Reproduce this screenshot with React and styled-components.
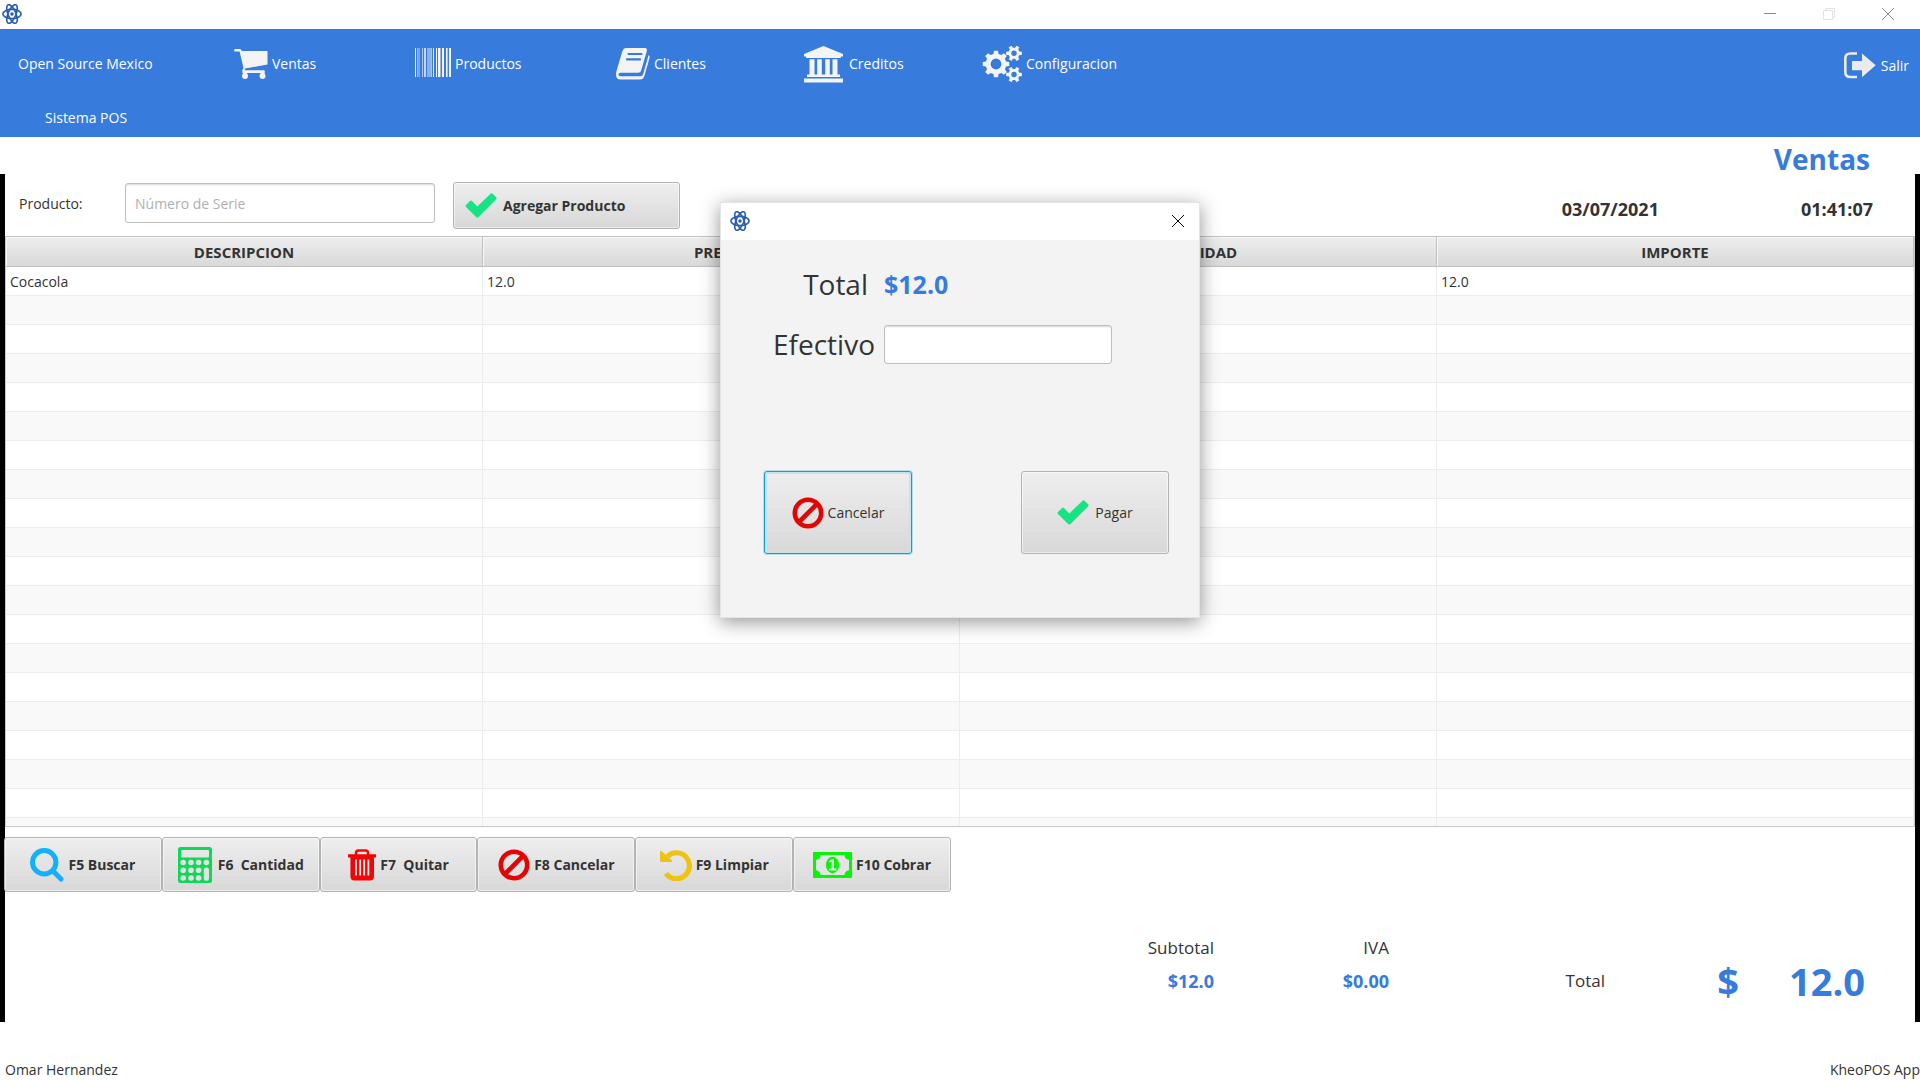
import React from "react";
import styled, { createGlobalStyle, css } from "styled-components";

const BLUE = "#377bdc";
const INK = "#333333";

const Global = createGlobalStyle`
  * { box-sizing: border-box; }
  html, body { margin: 0; background: #fff; }
  body, button, input { font-family: "Open Sans", "Noto Sans", sans-serif; font-size: 14px; line-height: 20px; color: ${INK}; }
  svg { display: block; flex: none; }
`;

/* ---------- drawings ---------- */
const Logo = () => (
  <svg width="20" height="20" viewBox="0 0 20 20" fill="none" stroke="#2a5fae" strokeWidth="1.7" aria-hidden="true">
    <ellipse cx="10" cy="10" rx="9.1" ry="4.6" />
    <ellipse cx="10" cy="10" rx="10" ry="3.9" transform="rotate(67 10 10)" />
    <ellipse cx="10" cy="10" rx="10" ry="3.9" transform="rotate(-67 10 10)" />
    <circle cx="10" cy="10" r="1.8" fill="#2a5fae" stroke="none" />
  </svg>
);

const Cart = () => (
  <svg width="34" height="30" viewBox="0 0 34 30" fill="#f4f4f4" aria-hidden="true">
    <path d="M1.2 0H6.4L8 2H33.5V15.5L11 19.5L10.7 21.3H30.5V24H8.5L8.2 21.5L9.5 19L5.6 2.6H1.2Q0 2.4 0 1.3Q0 .2 1.2 0Z" />
    <circle cx="11" cy="27" r="3" />
    <circle cx="28.5" cy="27" r="3" />
    <path d="M9 22h4v4H9zM26.5 22h4v4h-4z" />
  </svg>
);

const bars = [[0, 1], [2, 1, 0.5], [3, 2, 0.35], [7, 1, 0.6], [9, 2, 0.75], [12, 4, 0.45], [16, 1, 0.6], [18, 1], [21, 1], [23, 2], [25, 1, 0.5], [27, 2], [31, 1], [32, 1, 0.6], [34, 2]];
const Barcode = () => (
  <svg width="36" height="32" viewBox="0 0 36 32" fill="#f4f4f4" aria-hidden="true">
    {bars.map(([x, w, o]) => <rect key={x} x={x} y="0" width={w} height="29" opacity={o || 1} />)}
  </svg>
);

const Book = () => (
  <svg width="34" height="32" viewBox="0 0 34 32" aria-hidden="true">
    <path d="M10 0H29Q31.5.3 30.8 3L25.2 22.5Q24.5 24.8 22 24.8H4.5Q2 25 2.6 27.2Q3 28.2 5 28.2H24.5Q26.5 28.2 27.2 26L32.6 7Q34 8 33.5 10L28.4 28Q27.2 31.6 24 31.6H4.5Q0 31.4 0 26.5Q0 24.5 .8 22L6.4 3Q7.4.2 10 0Z" fill="#f4f4f4" />
    <path d="M12.5 6h13M11 11.4h13" stroke={BLUE} strokeWidth="2.2" strokeLinecap="round" />
  </svg>
);

const Bank = () => (
  <svg width="41" height="37" viewBox="0 0 41 37" fill="#f4f4f4" aria-hidden="true">
    <path d="M19.5 0L39 8V10.5H36.8V12H2.2V10.5H0V8ZM5.5 13.2H10.5V28.5H13.2V13.2H17.8V28.5H21.2V13.2H25.8V28.5H28.5V13.2H33.5V28.5H36V31H3V28.5H5.5ZM0 32.5H39V36.5H0Z" />
  </svg>
);

const gearPath = (cx, cy, r, inner, teeth) => {
  const step = (Math.PI * 2) / teeth;
  const pts = [];
  for (let i = 0; i < teeth; i += 1) {
    const a = i * step;
    [[-0.31, inner], [-0.2, r], [0.2, r], [0.31, inner]].forEach(([t, rad]) => {
      pts.push(`${(cx + Math.cos(a + t * step) * rad).toFixed(2)} ${(cy + Math.sin(a + t * step) * rad).toFixed(2)}`);
    });
  }
  return `M${pts.join("L")}Z`;
};
const hole = (cx, cy, r) => `M${cx - r} ${cy}a${r} ${r} 0 1 0 ${2 * r} 0a${r} ${r} 0 1 0 ${-2 * r} 0Z`;
const Gears = () => (
  <svg width="40" height="36" viewBox="0 0 40 36" fill="#f4f4f4" fillRule="evenodd" aria-hidden="true">
    <path d={gearPath(14, 18, 13.4, 10.4, 8) + hole(14, 18, 5.4)} />
    <path d={gearPath(32, 7.3, 8, 5.6, 6) + hole(32, 7.3, 2.7)} />
    <path d={gearPath(32, 28.5, 8, 5.6, 6) + hole(32, 28.5, 2.7)} />
  </svg>
);

const Exit = () => (
  <svg width="33" height="28" viewBox="0 0 33 28" aria-hidden="true">
    <path d="M13 1.5H6.5Q1.3 1.5 1.3 6.5V20Q1.3 25 6.5 25H13" fill="none" stroke="#ebebeb" strokeWidth="2.6" />
    <path d="M8 9H18V1.5L31.7 13.3L18 25.2V18.3H8Z" fill="#ebebeb" />
  </svg>
);

const Check = () => (
  <svg width="32" height="25" viewBox="0 0 32 25" aria-hidden="true">
    <path d="M1 12L5 8Q6 7.2 7 8L12.3 13.4L25.6 .7Q26.7 0 27.6 .8L31.2 4.3Q32 5.3 31.2 6.3L13.3 24.2Q12.3 25 11.3 24.2L1 14Q0 13 1 12Z" fill="#17e383" />
  </svg>
);

const Ban = () => (
  <svg width="32" height="32" viewBox="0 0 32 32" fill="none" stroke="#e30505" strokeWidth="4.6" aria-hidden="true">
    <circle cx="16" cy="16" r="13.2" />
    <path d="M6.5 25.5L25.5 6.5" />
  </svg>
);

const Search = () => (
  <svg width="34" height="34" viewBox="0 0 34 34" fill="none" stroke="#12b0ff" strokeWidth="5" strokeLinecap="round" aria-hidden="true">
    <circle cx="14.2" cy="14.2" r="11.7" />
    <path d="M23.5 23.5L31 31" />
  </svg>
);

const Calculator = () => (
  <svg width="36" height="36" viewBox="0 0 36 36" aria-hidden="true">
    <rect width="34" height="36" rx="2.5" fill="#0fd858" />
    <rect x="3" y="3" width="28" height="7.6" rx="1" fill="#e6e6e6" />
    <g fill="#e2e2e2">
      {[15.5, 23.3, 31].map((y) => [5.2, 13, 20.6].map((x) => <circle key={`${x}-${y}`} cx={x} cy={y} r="2.8" />))}
      <circle cx="28.4" cy="15.5" r="2.8" />
      <rect x="25.8" y="20.6" width="5.2" height="13.2" rx="2.2" />
    </g>
  </svg>
);

const Trash = () => (
  <svg width="28" height="32" viewBox="0 0 28 32" aria-hidden="true">
    <path d="M8 6V3.8Q8 1.5 10.3 1.5H17.7Q20 1.5 20 3.8V6" fill="none" stroke="#f20505" strokeWidth="2.4" />
    <path d="M0 5.2H28V8.6H26V27Q26 31.5 21.8 31.5H6.2Q2.4 31.5 2.4 27V8.6H0Z" fill="#f20505" />
    <path d="M8 10.5V26.5M12.2 10.5V26.5M16.2 10.5V26.5M20.4 10.5V26.5" stroke="#e6e6e6" strokeWidth="1.8" />
  </svg>
);

const Undo = () => (
  <svg width="32" height="32" viewBox="0 0 32 32" aria-hidden="true">
    <path d="M7.4 7.4A13 13 0 1 1 6 24.5" fill="none" stroke="#efc312" strokeWidth="5.2" />
    <path d="M0 2.4Q.4 1.4 1.6 2.2L12 11.6Q12.6 12.8 11.2 13H1.2Q0 12.8 0 11.6Z" fill="#efc312" />
  </svg>
);

const Money = () => (
  <svg width="39" height="26" viewBox="0 0 39 26" aria-hidden="true">
    <rect width="39" height="26" rx="1" fill="#05f505" />
    <path d="M7.5 3H31.5Q31.8 7.4 36 7.8V18.2Q31.8 18.6 31.5 23H7.5Q7.2 18.6 3 18.2V7.8Q7.2 7.4 7.5 3Z" fill="#e4e4e4" />
    <ellipse cx="19.5" cy="13" rx="6.6" ry="8.3" fill="#05f505" />
    <path d="M16.3 8.8L19.4 7H21V16.6H23.6V18.6H15.8V16.6H18.5V9.8L16.3 10.6Z" fill="#e4e4e4" />
  </svg>
);

/* ---------- shared parts ---------- */
const raised = css`
  border: 1px solid #b3b3b3;
  border-radius: 3px;
  background: linear-gradient(#eeeeee, #d8d8d8);
  box-shadow: inset 0 0 0 1px rgba(255, 255, 255, 0.55);
`;

const field = css`
  border: 1px solid #bdbdbd;
  border-radius: 3px;
  background: #fff;
  box-shadow: inset 0 2px 2px -1px #d8d8d8;
  outline: none;
  min-width: 0;
`;

/* ---------- window ---------- */
const Window = styled.div`
  min-height: 100vh;
  display: flex;
  flex-direction: column;
  overflow: hidden;
`;

const TitleBar = styled.header`
  height: 29px;
  padding: 4px 0 0 2px;
  display: flex;
  justify-content: space-between;
`;

const WindowButtons = styled.div`
  display: flex;
  gap: 35px;
  padding: 1px 20px 0 0;
`;

const GlyphButton = styled.button`
  border: 0;
  padding: 0 6px;
  height: 18px;
  background: none;
  color: ${(p) => p.$color};
`;

const Menu = styled.nav`
  height: 108px;
  padding: 15px 11px 0 18px;
  background: ${BLUE};
  color: #fff;
  display: grid;
  grid-template-columns: 210px 183px 199px 195px 177px auto 1fr;
  grid-template-rows: 40px 34px;
  row-gap: 17px;
  align-items: center;
`;

const Brand = styled.span`
  grid-row: ${(p) => p.$row};
  padding-left: ${(p) => (p.$row === 2 ? 27 : 0)}px;
`;

const MenuButton = styled.button`
  display: flex;
  align-items: center;
  gap: 4px;
  height: 40px;
  padding: 0;
  border: 0;
  background: none;
  color: #fff;
  ${(p) => p.$end && "justify-self: end; padding-top: 4px;"}
`;

const IconBox = styled.span`
  width: 40px;
  display: flex;
  justify-content: flex-end;
`;

const PageTitle = styled.h1`
  margin: 0;
  height: 37px;
  padding: 3px 50px 0 0;
  text-align: right;
  color: ${BLUE};
  font-size: 28px;
  line-height: 38px;
`;

const Frame = styled.main`
  height: 848px;
  border: solid #000;
  border-width: 0 5px;
`;

const EntryBar = styled.form`
  height: 62px;
  padding: 8px 42px 0 14px;
  display: flex;
  align-items: flex-start;
`;

const EntryLabel = styled.label`
  width: 106px;
  padding-top: 12px;
`;

const SerialInput = styled.input`
  ${field}
  width: 310px;
  height: 40px;
  margin: 1px 18px 0 0;
  padding: 0 9px;
  &::placeholder { color: #b0b0b0; opacity: 1; }
`;

const AddButton = styled.button`
  ${raised}
  width: 227px;
  height: 47px;
  padding: 0 11px;
  display: flex;
  align-items: center;
  gap: 6px;
  font-weight: 700;
`;

const Clock = styled.div`
  margin-left: auto;
  padding-top: 15px;
  display: flex;
  gap: 142px;
  font-size: 18px;
  line-height: 24px;
  font-weight: 700;
`;

const TableBox = styled.div`
  height: 591px;
  overflow: hidden;
  border: 1px solid #c8c8c8;
  border-width: 0 1px 1px 1px;
`;

const Table = styled.table`
  width: 100%;
  table-layout: fixed;
  border-collapse: separate;
  border-spacing: 0;
`;

const HeadCell = styled.th`
  height: 31px;
  padding: 0;
  border: solid #c0c0c0;
  border-width: 1px 1px 1px 0;
  background: linear-gradient(#eeeeee, #d9d9d9);
  box-shadow: inset 1px 1px 0 #f8f8f8;
  font-size: 15px;
`;

const Row = styled.tr`
  background: ${(p) => (p.$odd ? "#f9f9f9" : "#fff")};
`;

const Cell = styled.td`
  height: 29px;
  padding: 2px 4px 0;
  border: solid #ededed;
  border-width: 0 1px 1px 0;
`;

const Actions = styled.div`
  max-width: 947px;
  margin-left: -1px;
  padding-top: 10px;
  display: flex;
`;

const ActionButton = styled.button`
  ${raised}
  flex: 1 1 0;
  height: 55px;
  padding: 0;
  display: flex;
  align-items: center;
  justify-content: center;
  gap: 4px;
  font-weight: 700;
  white-space: pre;
`;

const Totals = styled.section`
  padding: 44px 50px 0 0;
  display: grid;
  grid-template-columns: 1fr 175px 216px 134px 126px;
  grid-template-rows: 24px 42px;
  align-items: center;
  justify-items: end;
  font-size: 17px;
  line-height: 24px;
`;

const Caption = styled.span`
  grid-column: ${(p) => p.$col};
  grid-row: ${(p) => p.$row || 1};
`;

const Amount = styled.strong`
  grid-column: ${(p) => p.$col};
  grid-row: 2;
  color: ${BLUE};
  font-size: ${(p) => (p.$large ? 38 : 18)}px;
  line-height: ${(p) => (p.$large ? 42 : 24)}px;
`;

const Footer = styled.footer`
  flex: 1;
  padding: 38px 0 0 5px;
  display: flex;
  justify-content: space-between;
`;

/* ---------- payment dialog ---------- */
const Dialog = styled.section`
  position: absolute;
  top: 202px;
  left: 50%;
  width: 480px;
  height: 416px;
  margin-left: -240px;
  background: #f3f3f3;
  border: 1px solid #e4e4e4;
  box-shadow: 0 4px 18px rgba(0, 0, 0, 0.42);
`;

const DialogBar = styled.header`
  height: 37px;
  padding: 0 9px 2px 9px;
  background: #fff;
  display: flex;
  align-items: center;
  justify-content: space-between;
`;

const PayForm = styled.form`
  display: grid;
  grid-template-columns: 154px 228px;
  grid-template-rows: 40px 40px;
  column-gap: 9px;
  row-gap: 20px;
  align-items: center;
  padding-top: 24px;
`;

const PayLabel = styled.label`
  justify-self: end;
  padding-right: ${(p) => p.$inset || 0}px;
  font-size: 28px;
  line-height: 40px;
`;

const PayTotal = styled.output`
  color: ${BLUE};
  font-size: 25px;
  line-height: 40px;
  font-weight: 700;
`;

const CashInput = styled.input`
  ${field}
  width: 228px;
  height: 39px;
  padding: 0 10px;
`;

const DialogActions = styled.div`
  grid-column: 1 / -1;
  display: flex;
  gap: 109px;
  padding: 87px 0 0 43px;
`;

const DialogButton = styled.button`
  ${raised}
  flex: none;
  width: 148px;
  height: 83px;
  padding: 0;
  display: flex;
  align-items: center;
  justify-content: center;
  gap: ${(p) => (p.$focus ? 4 : 6)}px;
  ${(p) => p.$focus && css`
    border-color: #0f9fd6;
    box-shadow: 0 0 0 1px #b3dfee, inset 0 0 0 2px #cbe2e8;
  `}
`;

const menu = [
  ["Ventas", Cart],
  ["Productos", Barcode],
  ["Clientes", Book],
  ["Creditos", Bank],
  ["Configuracion", Gears],
];

const actions = [
  ["F5 Buscar", Search],
  ["F6  Cantidad", Calculator],
  ["F7  Quitar", Trash],
  ["F8 Cancelar", Ban],
  ["F9 Limpiar", Undo],
  ["F10 Cobrar", Money],
];

const columns = ["DESCRIPCION", "PRECIO", "CANTIDAD", "IMPORTE"];
const sale = ["Cocacola", "12.0", "1", "12.0"];
const rows = [sale, ...Array.from({ length: 19 }, () => ["", "", "", ""])];

const CloseGlyph = () => (
  <svg width="12" height="12" viewBox="0 0 12 12" stroke="currentColor" fill="none" aria-hidden="true"><path d="M0 0L12 12M12 0L0 12" /></svg>
);

export default function App() {
  return (
    <Window>
      <Global />
      <TitleBar>
        <Logo />
        <WindowButtons>
          <GlyphButton type="button" aria-label="Minimizar" $color="#8a8a8a">
            <svg width="12" height="12" viewBox="0 0 12 12" stroke="currentColor"><path d="M0 5.5H12" /></svg>
          </GlyphButton>
          <GlyphButton type="button" aria-label="Restaurar" $color="#e3e3e3">
            <svg width="12" height="12" viewBox="0 0 12 12" stroke="currentColor" fill="none"><path d="M.5 2.5H9.5V11.5H.5ZM2.5 2.5V.5H11.5V9.5H9.5" /></svg>
          </GlyphButton>
          <GlyphButton type="button" aria-label="Cerrar" $color="#8a8a8a"><CloseGlyph /></GlyphButton>
        </WindowButtons>
      </TitleBar>

      <Menu>
        <Brand $row={1}>Open Source Mexico</Brand>
        {menu.map(([name, Icon]) => (
          <MenuButton key={name} type="button"><IconBox><Icon /></IconBox>{name}</MenuButton>
        ))}
        <MenuButton type="button" $end><Exit />Salir</MenuButton>
        <Brand $row={2}>Sistema POS</Brand>
      </Menu>

      <PageTitle>Ventas</PageTitle>

      <Frame>
        <EntryBar onSubmit={(e) => e.preventDefault()}>
          <EntryLabel htmlFor="serie">Producto:</EntryLabel>
          <SerialInput id="serie" placeholder="Número de Serie" />
          <AddButton type="submit"><Check />Agregar Producto</AddButton>
          <Clock><span>03/07/2021</span><span>01:41:07</span></Clock>
        </EntryBar>

        <TableBox>
          <Table>
            <thead><tr>{columns.map((c) => <HeadCell key={c} scope="col">{c}</HeadCell>)}</tr></thead>
            <tbody>
              {rows.map((r, i) => (
                <Row key={i} $odd={i % 2 === 1}>{r.map((v, j) => <Cell key={j}>{v}</Cell>)}</Row>
              ))}
            </tbody>
          </Table>
        </TableBox>

        <Actions>
          {actions.map(([name, Icon]) => <ActionButton key={name} type="button"><Icon />{name}</ActionButton>)}
        </Actions>

        <Totals>
          <Caption $col={1}>Subtotal</Caption>
          <Amount $col={1}>$12.0</Amount>
          <Caption $col={2}>IVA</Caption>
          <Amount $col={2}>$0.00</Amount>
          <Caption $col={3} $row={2}>Total</Caption>
          <Amount $col={4} $large>$</Amount>
          <Amount $col={5} $large>12.0</Amount>
        </Totals>
      </Frame>

      <Footer><span>Omar Hernandez</span><span>KheoPOS App</span></Footer>

      <Dialog role="dialog" aria-label="Pago">
        <DialogBar>
          <Logo />
          <GlyphButton type="button" aria-label="Cerrar" $color="#000"><CloseGlyph /></GlyphButton>
        </DialogBar>
        <PayForm onSubmit={(e) => e.preventDefault()}>
          <PayLabel htmlFor="total" $inset={7}>Total</PayLabel>
          <PayTotal id="total">$12.0</PayTotal>
          <PayLabel htmlFor="efectivo">Efectivo</PayLabel>
          <CashInput id="efectivo" />
          <DialogActions>
            <DialogButton type="button" $focus><Ban />Cancelar</DialogButton>
            <DialogButton type="submit"><Check />Pagar</DialogButton>
          </DialogActions>
        </PayForm>
      </Dialog>
    </Window>
  );
}
